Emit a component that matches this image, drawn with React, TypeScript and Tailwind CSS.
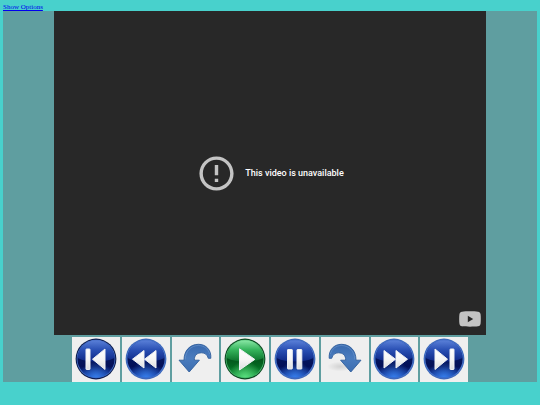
import React from 'react';

interface OrbProps {
  id: string;
  green?: boolean;
  dark?: boolean;
  children: React.ReactNode;
}

const Gradients: React.FC = () => (
  <svg width="0" height="0" className="absolute" aria-hidden="true">
    <defs>
      <linearGradient id="glyph" x1="0" y1="0" x2="0" y2="1">
        <stop offset="0" stopColor="#ffffff" />
        <stop offset="0.5" stopColor="#f6f6f6" />
        <stop offset="1" stopColor="#dcdde0" />
      </linearGradient>
      <linearGradient id="arrow" x1="0" y1="0" x2="0" y2="1">
        <stop offset="0" stopColor="#3869ae" />
        <stop offset="0.5" stopColor="#4a7cbe" />
        <stop offset="1" stopColor="#3d6eb0" />
      </linearGradient>
      <radialGradient id="shadow">
        <stop offset="0" stopColor="#000000" stopOpacity="0.12" />
        <stop offset="1" stopColor="#000000" stopOpacity="0" />
      </radialGradient>
    </defs>
  </svg>
);

// Glossy round button: lit top half, dark band in the middle, glow at the bottom
const Orb: React.FC<OrbProps> = ({ id, green, dark, children }) => (
  <svg viewBox="0 0 42 42" className="h-[42px] w-[42px]" aria-hidden="true">
    <defs>
      <linearGradient id={`${id}-base`} x1="0" y1="0" x2="0" y2="1">
        <stop offset="0" stopColor={green ? '#2fae55' : '#2448b0'} />
        <stop offset="0.5" stopColor={green ? '#04561c' : '#04145c'} />
        <stop offset="0.7" stopColor={green ? '#046a22' : '#031058'} />
        <stop offset="1" stopColor={green ? '#18a044' : '#1746b4'} />
      </linearGradient>
      <linearGradient id={`${id}-gloss`} x1="0" y1="0" x2="0" y2="1">
        <stop offset="0" stopColor={green ? '#8ae8a6' : '#5a80d8'} />
        <stop offset="0.45" stopColor={green ? '#35b45c' : '#2a50b4'} />
        <stop offset="1" stopColor={green ? '#0a702a' : '#0e2886'} />
      </linearGradient>
      <radialGradient id={`${id}-glow`} cx="0.5" cy="1" r="0.45">
        <stop offset="0" stopColor={green ? '#6cf08e' : '#3f8cf8'} stopOpacity="0.8" />
        <stop offset="1" stopColor={green ? '#6cf08e' : '#3f8cf8'} stopOpacity="0" />
      </radialGradient>
    </defs>
    <circle cx="21" cy="21" r="20.4" fill={green ? '#0a4a20' : dark ? '#0c1c50' : '#3c68bc'} />
    <circle cx="21" cy="21" r="19.3" fill={green ? '#4fb873' : '#4a76cc'} />
    <circle cx="21" cy="21" r="18.6" fill={`url(#${id}-base)`} />
    <circle cx="21" cy="21" r="18.6" fill={`url(#${id}-glow)`} />
    <path d="M2.6 20A18.4 17.8 0 0 1 39.4 20C34 22.6 28 23.6 21 23.6S8 22.6 2.6 20Z" fill={`url(#${id}-gloss)`} />
    <g fill="url(#glyph)" stroke="#eef0f4" strokeWidth="1" strokeLinejoin="round">
      {children}
    </g>
  </svg>
);

const CurvedArrow: React.FC<{ flip?: boolean }> = ({ flip }) => (
  <svg viewBox="0 0 42 42" className="h-[42px] w-[42px]" aria-hidden="true">
    {flip && <ellipse cx="16" cy="28.5" rx="13" ry="5" fill="url(#shadow)" />}
    <g transform={flip ? 'translate(42 0) scale(-1 1)' : undefined}>
      <path
        d="M5 22.2H10C10 12.5 16 6.3 24.5 6.3C32 6.3 37.5 12 36.8 20.3H34.3C33.3 16.6 31 14.8 27.6 14.8C23 14.8 20 17.5 20.4 22.2H25.4L15.2 34Z"
        fill="url(#arrow)"
        stroke="#2f5d9c"
        strokeWidth="0.9"
        strokeLinejoin="round"
      />
      <path d="M11.2 21.5C11.4 13.2 17 7.5 24.5 7.5C30 7.5 34.2 10.8 35.6 16" fill="none" stroke="#6f98cf" strokeWidth="0.6" />
    </g>
  </svg>
);

const controls = [
  {
    label: 'Go to start',
    icon: (
      <Orb id="start" dark>
        <rect x="11" y="11" width="4" height="20.5" rx="0.5" />
        <path d="M30 11V31.5L17.5 21.2Z" />
      </Orb>
    ),
  },
  {
    label: 'Rewind',
    icon: (
      <Orb id="rewind">
        <path d="M31 12.5V30L19.5 21.2Z" />
        <path d="M19 12.5V30L7.5 21.2Z" />
      </Orb>
    ),
  },
  { label: 'Step back', icon: <CurvedArrow /> },
  {
    label: 'Play',
    icon: (
      <Orb id="play" green>
        <path d="M15.5 10.8V32L30.8 21.4Z" />
      </Orb>
    ),
  },
  {
    label: 'Pause',
    icon: (
      <Orb id="pause">
        <rect x="13.5" y="11.5" width="4.8" height="19.5" rx="0.5" />
        <rect x="23" y="11.5" width="4.8" height="19.5" rx="0.5" />
      </Orb>
    ),
  },
  { label: 'Step forward', icon: <CurvedArrow flip /> },
  {
    label: 'Fast forward',
    icon: (
      <Orb id="forward">
        <path d="M11 12.5V30L22.5 21.2Z" />
        <path d="M23 12.5V30L34.5 21.2Z" />
      </Orb>
    ),
  },
  {
    label: 'Go to end',
    icon: (
      <Orb id="end">
        <path d="M12 11V31.5L24.5 21.2Z" />
        <rect x="27" y="11" width="4" height="20.5" rx="0.5" />
      </Orb>
    ),
  },
];

const VideoFrame: React.FC = () => (
  <div className="relative flex aspect-[4/3] w-[80vw] items-center justify-center gap-2 bg-[#282828]">
    <svg viewBox="0 0 24 24" className="h-[41px] w-[41px] fill-[#c4c4c4]" aria-hidden="true">
      <path d="M11 15h2v2h-2zm0-8h2v6h-2zm1-5C6.5 2 2 6.5 2 12s4.5 10 10 10 10-4.5 10-10S17.5 2 12 2zm0 18c-4.4 0-8-3.6-8-8s3.6-8 8-8 8 3.6 8 8-3.6 8-8 8z" />
    </svg>
    <p className="font-[Roboto,sans-serif] text-[9px] leading-4 font-medium text-white">This video is unavailable</p>
    <a href="#youtube" aria-label="YouTube" className="absolute right-[5px] bottom-2">
      <svg viewBox="0 0 22 16" className="h-4 w-[22px]" aria-hidden="true">
        <path
          d="M3 .7C7 .2 15 .2 19 .7C20.7 .9 21.4 2 21.6 3.5C21.9 6 21.9 10 21.6 12.5C21.4 14 20.7 15.1 19 15.3C15 15.8 7 15.8 3 15.3C1.3 15.1 .6 14 .4 12.5C.1 10 .1 6 .4 3.5C.6 2 1.3 .9 3 .7Z"
          fill="#c4c4c4"
        />
        <path d="M8.8 4.8V11.2L14.2 8Z" fill="#282828" />
      </svg>
    </a>
  </div>
);

export default function App() {
  return (
    <main className="min-h-screen bg-[#48d1cc] px-[3px] pt-[3px]">
      <Gradients />
      <a
        href="#options"
        className="block h-2 w-fit font-['Liberation_Serif',serif] text-[7px] leading-2 text-[#0000ee] underline"
      >
        Show Options
      </a>
      <div className="flex flex-col items-center gap-[2px] bg-[#5f9ea0]">
        <VideoFrame />
        <div className="grid w-[396px] grid-cols-8 gap-[2px]">
          {controls.map((control) => (
            <button
              key={control.label}
              type="button"
              aria-label={control.label}
              className="flex h-[45px] items-start justify-center bg-[#efefef] pt-px"
            >
              {control.icon}
            </button>
          ))}
        </div>
      </div>
    </main>
  );
}
